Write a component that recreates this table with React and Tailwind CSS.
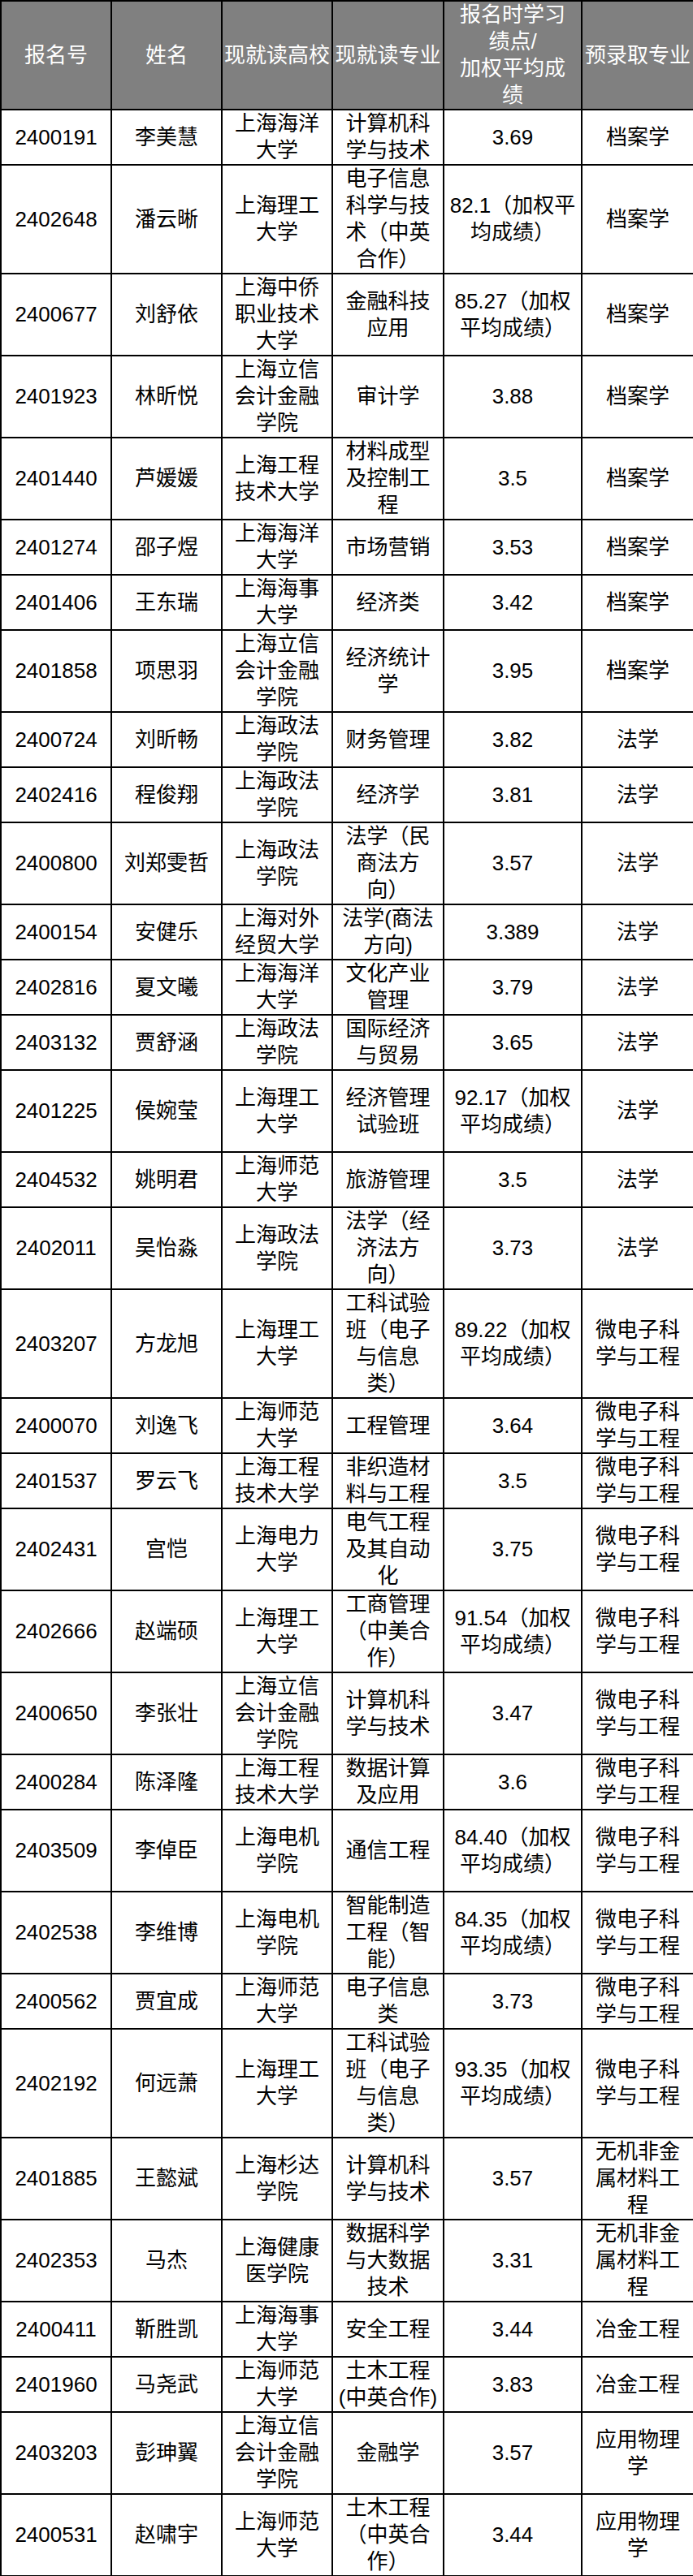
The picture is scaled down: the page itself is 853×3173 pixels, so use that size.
import React from 'react';

// 预录取名单表：每个单元格按原图的换行逐行写出
const rows = [
  ['2400191', '李美慧', ['上海海洋', '大学'], ['计算机科', '学与技术'], ['3.69'], ['档案学'], 'h-[68px]'],
  ['2402648', '潘云晰', ['上海理工', '大学'], ['电子信息', '科学与技', '术（中英', '合作）'], ['82.1（加权平', '均成绩）'], ['档案学'], 'h-[134px]'],
  ['2400677', '刘舒依', ['上海中侨', '职业技术', '大学'], ['金融科技', '应用'], ['85.27（加权', '平均成绩）'], ['档案学'], 'h-[101px]'],
  ['2401923', '林昕悦', ['上海立信', '会计金融', '学院'], ['审计学'], ['3.88'], ['档案学'], 'h-[101px]'],
  ['2401440', '芦媛媛', ['上海工程', '技术大学'], ['材料成型', '及控制工', '程'], ['3.5'], ['档案学'], 'h-[101px]'],
  ['2401274', '邵子煜', ['上海海洋', '大学'], ['市场营销'], ['3.53'], ['档案学'], 'h-[68px]'],
  ['2401406', '王东瑞', ['上海海事', '大学'], ['经济类'], ['3.42'], ['档案学'], 'h-[68px]'],
  ['2401858', '项思羽', ['上海立信', '会计金融', '学院'], ['经济统计', '学'], ['3.95'], ['档案学'], 'h-[101px]'],
  ['2400724', '刘昕畅', ['上海政法', '学院'], ['财务管理'], ['3.82'], ['法学'], 'h-[68px]'],
  ['2402416', '程俊翔', ['上海政法', '学院'], ['经济学'], ['3.81'], ['法学'], 'h-[68px]'],
  ['2400800', '刘郑雯哲', ['上海政法', '学院'], ['法学（民', '商法方', '向）'], ['3.57'], ['法学'], 'h-[101px]'],
  ['2400154', '安健乐', ['上海对外', '经贸大学'], ['法学(商法', '方向)'], ['3.389'], ['法学'], 'h-[68px]'],
  ['2402816', '夏文曦', ['上海海洋', '大学'], ['文化产业', '管理'], ['3.79'], ['法学'], 'h-[68px]'],
  ['2403132', '贾舒涵', ['上海政法', '学院'], ['国际经济', '与贸易'], ['3.65'], ['法学'], 'h-[68px]'],
  ['2401225', '侯婉莹', ['上海理工', '大学'], ['经济管理', '试验班'], ['92.17（加权', '平均成绩）'], ['法学'], 'h-[101px]'],
  ['2404532', '姚明君', ['上海师范', '大学'], ['旅游管理'], ['3.5'], ['法学'], 'h-[68px]'],
  ['2402011', '吴怡淼', ['上海政法', '学院'], ['法学（经', '济法方', '向）'], ['3.73'], ['法学'], 'h-[101px]'],
  ['2403207', '方龙旭', ['上海理工', '大学'], ['工科试验', '班（电子', '与信息', '类）'], ['89.22（加权', '平均成绩）'], ['微电子科', '学与工程'], 'h-[134px]'],
  ['2400070', '刘逸飞', ['上海师范', '大学'], ['工程管理'], ['3.64'], ['微电子科', '学与工程'], 'h-[68px]'],
  ['2401537', '罗云飞', ['上海工程', '技术大学'], ['非织造材', '料与工程'], ['3.5'], ['微电子科', '学与工程'], 'h-[68px]'],
  ['2402431', '宫恺', ['上海电力', '大学'], ['电气工程', '及其自动', '化'], ['3.75'], ['微电子科', '学与工程'], 'h-[101px]'],
  ['2402666', '赵端硕', ['上海理工', '大学'], ['工商管理', '（中美合', '作）'], ['91.54（加权', '平均成绩）'], ['微电子科', '学与工程'], 'h-[101px]'],
  ['2400650', '李张壮', ['上海立信', '会计金融', '学院'], ['计算机科', '学与技术'], ['3.47'], ['微电子科', '学与工程'], 'h-[101px]'],
  ['2400284', '陈泽隆', ['上海工程', '技术大学'], ['数据计算', '及应用'], ['3.6'], ['微电子科', '学与工程'], 'h-[68px]'],
  ['2403509', '李倬臣', ['上海电机', '学院'], ['通信工程'], ['84.40（加权', '平均成绩）'], ['微电子科', '学与工程'], 'h-[101px]'],
  ['2402538', '李维博', ['上海电机', '学院'], ['智能制造', '工程（智', '能）'], ['84.35（加权', '平均成绩）'], ['微电子科', '学与工程'], 'h-[101px]'],
  ['2400562', '贾宜成', ['上海师范', '大学'], ['电子信息', '类'], ['3.73'], ['微电子科', '学与工程'], 'h-[68px]'],
  ['2402192', '何远萧', ['上海理工', '大学'], ['工科试验', '班（电子', '与信息', '类）'], ['93.35（加权', '平均成绩）'], ['微电子科', '学与工程'], 'h-[134px]'],
  ['2401885', '王懿斌', ['上海杉达', '学院'], ['计算机科', '学与技术'], ['3.57'], ['无机非金', '属材料工', '程'], 'h-[101px]'],
  ['2402353', '马杰', ['上海健康', '医学院'], ['数据科学', '与大数据', '技术'], ['3.31'], ['无机非金', '属材料工', '程'], 'h-[101px]'],
  ['2400411', '靳胜凯', ['上海海事', '大学'], ['安全工程'], ['3.44'], ['冶金工程'], 'h-[68px]'],
  ['2401960', '马尧武', ['上海师范', '大学'], ['土木工程', '(中英合作)'], ['3.83'], ['冶金工程'], 'h-[68px]'],
  ['2403203', '彭珅翼', ['上海立信', '会计金融', '学院'], ['金融学'], ['3.57'], ['应用物理', '学'], 'h-[101px]'],
  ['2400531', '赵啸宇', ['上海师范', '大学'], ['土木工程', '（中英合', '作）'], ['3.44'], ['应用物理', '学'], 'h-[101px]'],
];

const headers = [
  ['报名号'],
  ['姓名'],
  ['现就读高校'],
  ['现就读专业'],
  ['报名时学习', '绩点/', '加权平均成', '绩'],
  ['预录取专业'],
];

function Lines({ lines }) {
  return lines.map((l, i) => (
    <div key={i} className="whitespace-nowrap">{l}</div>
  ));
}

export default function App() {
  return (
    <div className="w-[853px] bg-white">
      <table className="w-[853px] table-fixed border-collapse font-['Liberation_Sans','Noto_Sans_CJK_SC',sans-serif] text-[26px] leading-[33px]">
        <colgroup>
          <col className="w-[136px]" />
          <col className="w-[136px]" />
          <col className="w-[136px]" />
          <col className="w-[137px]" />
          <col className="w-[170px]" />
          <col className="w-[138px]" />
        </colgroup>
        <thead>
          <tr className="h-[134px]">
            {headers.map((h, i) => (
              <th key={i} className="border-2 border-black bg-[#808080] p-0 text-center align-middle font-normal text-white">
                <Lines lines={h} />
              </th>
            ))}
          </tr>
        </thead>
        <tbody>
          {rows.map(([id, name, school, major, score, target, h]) => (
            <tr key={id} className={h}>
              <td className="border-2 border-black p-0 text-center align-middle text-black">{id}</td>
              <td className="border-2 border-black p-0 text-center align-middle text-black">{name}</td>
              <td className="border-2 border-black p-0 text-center align-middle text-black"><Lines lines={school} /></td>
              <td className="border-2 border-black p-0 text-center align-middle text-black"><Lines lines={major} /></td>
              <td className="border-2 border-black p-0 text-center align-middle text-black"><Lines lines={score} /></td>
              <td className="border-2 border-black p-0 text-center align-middle text-black"><Lines lines={target} /></td>
            </tr>
          ))}
        </tbody>
      </table>
    </div>
  );
}
